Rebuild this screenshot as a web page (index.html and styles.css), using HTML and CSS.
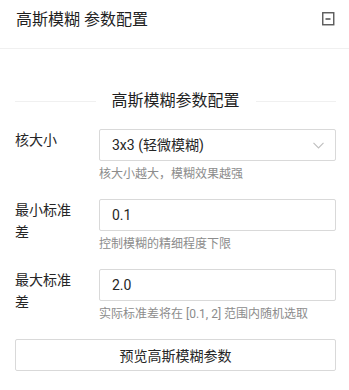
FILE: index.html
```html
<!DOCTYPE html>
<html lang="zh-CN">
<head>
<meta charset="utf-8">
<title>高斯模糊 参数配置</title>
<link rel="stylesheet" href="styles.css">
</head>
<body>
<div class="card">
  <div class="card-head">
    <div class="card-title">高斯模糊 参数配置</div>
    <svg class="collapse-icon" width="13" height="14" viewBox="0 0 13 14">
      <rect x="0.75" y="0.75" width="11" height="12" fill="none" stroke="#595959" stroke-width="1.4"/>
      <rect x="3.5" y="6.2" width="5" height="1.6" fill="#595959"/>
    </svg>
  </div>
  <div class="card-body">
    <div class="divider"><span class="divider-text">高斯模糊参数配置</span></div>

    <div class="form-item">
      <div class="label">核大小</div>
      <div class="control">
        <div class="input select">
          <span>3x3 (轻微模糊)</span>
          <svg class="chevron" width="11" height="7" viewBox="0 0 11 7">
            <path d="M0.5 0.8 L5.5 6 L10.5 0.8" fill="none" stroke="#bfbfbf" stroke-width="1.1"/>
          </svg>
        </div>
        <div class="help">核大小越大，模糊效果越强</div>
      </div>
    </div>

    <div class="form-item">
      <div class="label">最小标准差</div>
      <div class="control">
        <div class="input">0.1</div>
        <div class="help">控制模糊的精细程度下限</div>
      </div>
    </div>

    <div class="form-item">
      <div class="label">最大标准差</div>
      <div class="control">
        <div class="input">2.0</div>
        <div class="help">实际标准差将在 [0.1, 2] 范围内随机选取</div>
      </div>
    </div>

    <button class="btn" type="button">预览高斯模糊参数</button>
  </div>
</div>
</body>
</html>
```
FILE: styles.css
```css
html, body {
  margin: 0;
  padding: 0;
  background: #ffffff;
}
body {
  font-family: Roboto, "Noto Sans CJK SC", sans-serif;
  color: #262626;
  font-size: 14px;
}
.card {
  background: #ffffff;
}
.card-head {
  box-sizing: border-box;
  height: 49px;
  display: flex;
  align-items: center;
  justify-content: space-between;
  padding: 0 14px 9px 16px;
  border-bottom: 1px solid #f0f0f0;
}
.card-title {
  font-size: 16px;
  font-weight: 400;
  line-height: 24px;
  color: #1f1f1f;
}
.collapse-icon {
  display: block;
  margin-top: -2px;
}
.card-body {
  padding: 39px 13px 0 15px;
}
.divider {
  display: flex;
  align-items: center;
  font-size: 16px;
  font-weight: 400;
  line-height: 26px;
  margin-bottom: 15px;
  color: #1f1f1f;
}
.divider::before,
.divider::after {
  content: "";
  flex: 1;
  border-top: 1px solid #f0f0f0;
}
.divider-text {
  padding: 0 16px;
}
.form-item {
  display: flex;
  margin-bottom: 16px;
}
.label {
  flex: none;
  box-sizing: border-box;
  width: 84px;
  padding-right: 20px;
  font-size: 14px;
  line-height: 22px;
  color: #262626;
}
.control {
  flex: 1;
  min-width: 0;
}
.input {
  box-sizing: border-box;
  height: 32px;
  border: 1px solid #d9d9d9;
  border-radius: 2px;
  padding: 0 12px;
  font-size: 14px;
  line-height: 30px;
  color: #262626;
  background: #ffffff;
}
.select {
  display: flex;
  align-items: center;
  justify-content: space-between;
  padding-right: 11px;
}
.chevron {
  display: block;
}
.help {
  margin-top: 4px;
  font-size: 12px;
  line-height: 18px;
  color: #8c8c8c;
}
.btn {
  display: block;
  box-sizing: border-box;
  width: 100%;
  height: 32px;
  margin-top: 5px;
  border: 1px solid #d9d9d9;
  border-radius: 2px;
  background: #ffffff;
  font-family: Roboto, "Noto Sans CJK SC", sans-serif;
  font-size: 14px;
  color: #262626;
  padding: 0 15px;
}
```
